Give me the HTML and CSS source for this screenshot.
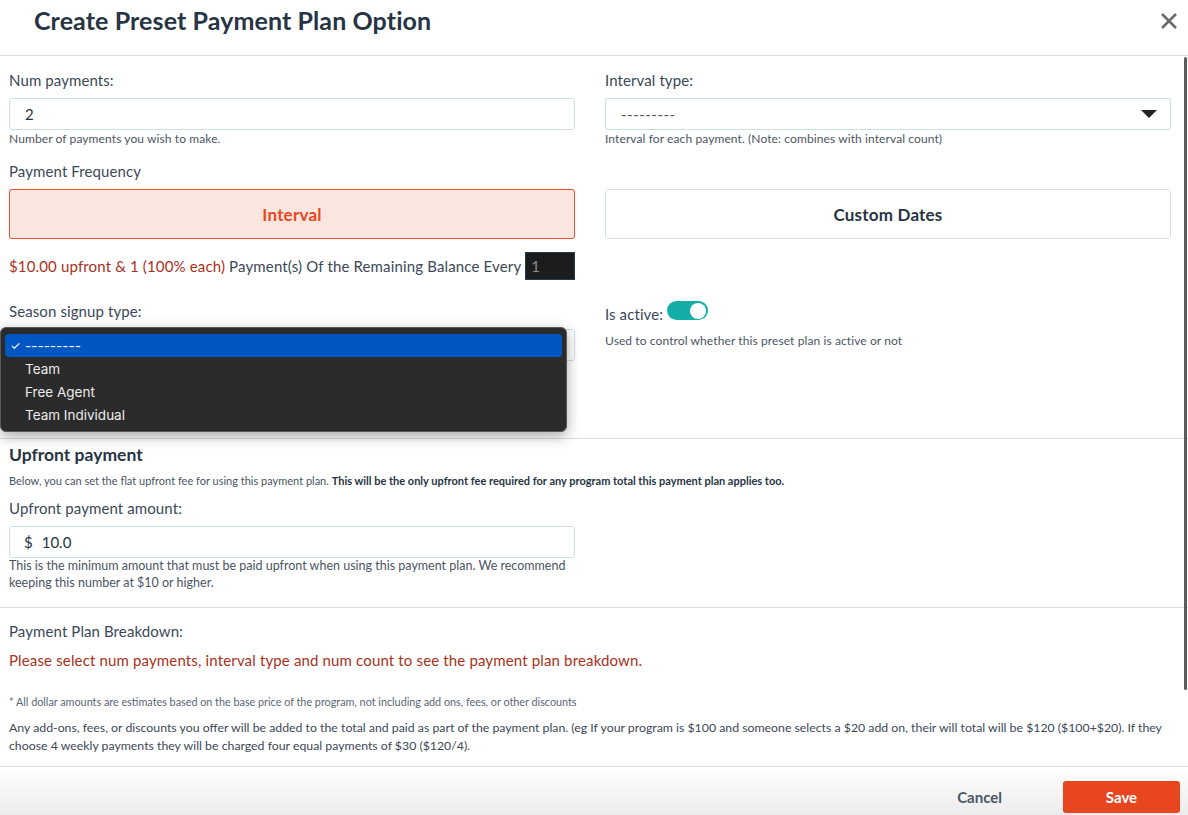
FILE: index.html
```html
<!DOCTYPE html>
<html lang="en">
<head>
<meta charset="utf-8">
<title>Create Preset Payment Plan Option</title>
<link rel="stylesheet" href="styles.css">
</head>
<body>
<div class="modal">
  <header class="modal-header">
    <h1 class="modal-title">Create Preset Payment Plan Option</h1>
    <button class="close-btn" aria-label="Close">
      <svg width="18" height="18" viewBox="0 0 18 18"><path d="M2 2 L16 16 M16 2 L2 16" stroke="#6b6b6b" stroke-width="2.6" stroke-linecap="butt"/></svg>
    </button>
  </header>

  <div class="modal-body">
    <div class="scroll-thumb"></div>

    <section class="section section-main">
      <div class="row">
        <div class="field">
          <label class="label">Num payments:</label>
          <div class="input"><span>2</span></div>
          <div class="help">Number of payments you wish to make.</div>
        </div>
        <div class="field">
          <label class="label">Interval type:</label>
          <div class="input select"><span class="placeholder">---------</span>
            <svg class="caret" width="16" height="8" viewBox="0 0 16 8"><path d="M0 0 H16 L8 8 Z" fill="#222"/></svg>
          </div>
          <div class="help">Interval for each payment. (Note: combines with interval count)</div>
        </div>
      </div>

      <div class="label freq-label">Payment Frequency</div>
      <div class="row">
        <button class="freq-btn active">Interval</button>
        <button class="freq-btn">Custom Dates</button>
      </div>
      <div class="row">
        <div class="summary">
          <span class="red">$10.00 upfront &amp; 1 (100% each)</span>&nbsp;Payment(s) Of the Remaining Balance Every
          <span class="dark-input">1</span>
        </div>
      </div>

      <div class="row season-row">
        <div class="field season-field">
          <label class="label">Season signup type:</label>
          <div class="input select season-select"></div>
          <div class="dropdown">
            <div class="opt selected"><span class="check">✓</span>---------</div>
            <div class="opt">Team</div>
            <div class="opt">Free Agent</div>
            <div class="opt">Team Individual</div>
          </div>
        </div>
        <div class="field active-field">
          <div class="active-line">
            <span class="label">Is active:</span>
            <span class="toggle"><span class="knob"></span></span>
          </div>
          <div class="help active-help">Used to control whether this preset plan is active or not</div>
        </div>
      </div>
    </section>

    <section class="section section-upfront">
      <h2 class="section-title">Upfront payment</h2>
      <p class="desc">Below, you can set the flat upfront fee for using this payment plan. <strong>This will be the only upfront fee required for any program total this payment plan applies too.</strong></p>
      <div class="half">
        <label class="label">Upfront payment amount:</label>
        <div class="input"><span class="dollar">$</span><span>10.0</span></div>
        <div class="help help-lg">This is the minimum amount that must be paid upfront when using this payment plan. We recommend keeping this number at $10 or higher.</div>
      </div>
    </section>

    <section class="section section-breakdown">
      <div class="label">Payment Plan Breakdown:</div>
      <p class="warn">Please select num payments, interval type and num count to see the payment plan breakdown.</p>
      <p class="note">* All dollar amounts are estimates based on the base price of the program, not including add ons, fees, or other discounts</p>
      <p class="para">Any add-ons, fees, or discounts you offer will be added to the total and paid as part of the payment plan. (eg If your program is $100 and someone selects a $20 add on, their will total will be $120 ($100+$20). If they choose 4 weekly payments they will be charged four equal payments of $30 ($120/4).</p>
    </section>
  </div>

  <footer class="modal-footer">
    <button class="cancel-btn">Cancel</button>
    <button class="save-btn">Save</button>
  </footer>
</div>
</body>
</html>
```

FILE: styles.css
```css
* { box-sizing: border-box; }
html, body { margin: 0; padding: 0; background: #fff; }
body {
  font-family: Lato, "Noto Sans", sans-serif;
  color: #3c4858;
  width: 1188px;
  height: 815px;
  overflow: hidden;
}
.modal { width: 1188px; height: 815px; display: flex; flex-direction: column; }

.modal-header {
  height: 56px;
  border-bottom: 1px solid #d9e0e7;
  display: flex;
  align-items: center;
  justify-content: space-between;
  padding: 0 10px 0 34px;
  flex: none;
}
.modal-title {
  margin: 0 0 16px 0;
  font-size: 25px;
  font-weight: 700;
  color: #273444;
  letter-spacing: 0.1px;
}
.close-btn {
  background: none; border: 0; padding: 0; margin: 0 0 14px 0;
  width: 18px; height: 18px; display: flex;
}

.modal-body { position: relative; flex: none; }
.scroll-thumb {
  position: absolute; right: 1px; top: 1px;
  width: 3px; height: 633px; background: #5c5c5c; border-radius: 2px;
}

.section { border-bottom: 1px solid #d9dde2; padding: 0 17px 0 9px; }
.row { display: grid; grid-template-columns: 1fr 1fr; column-gap: 30px; }
.field { display: flex; flex-direction: column; position: relative; }
.label { font-size: 15px; line-height: 20px; color: #3c4858; display: block; letter-spacing: 0.1px; }
.input {
  height: 32px;
  border: 1px solid #cfdde9;
  border-radius: 3px;
  margin-top: 8px;
  display: flex; align-items: center;
  padding: 0 15px;
  font-size: 15px; color: #273444;
  background: #fff;
}
.select { justify-content: space-between; }
.placeholder { color: #555; letter-spacing: 0.5px; }
.caret { margin-right: -2px; }
.help { font-size: 12px; line-height: 15px; color: #4b5563; margin-top: 1px; letter-spacing: 0.1px; }

.section-main { padding-top: 14px; padding-bottom: 77px; }
.freq-label { margin-top: 15px; }
.freq-btn {
  margin-top: 8px;
  height: 50px;
  border: 1px solid #d6dee6;
  border-radius: 3px;
  background: #fff;
  font-family: inherit;
  font-size: 17px; font-weight: 700; letter-spacing: 0.2px;
  color: #273444;
}
.freq-btn.active { background: #fae6df; border-color: #e8522c; color: #e8461f; }

.summary {
  margin-top: 13px;
  height: 28px;
  display: flex; align-items: center;
  font-size: 15px; color: #3c4858; letter-spacing: 0.15px;
  white-space: nowrap;
}
.red { color: #a8321b; }
.dark-input {
  margin-left: 4px;
  width: 50px; height: 28px;
  background: #1a1c1d;
  border: 1px solid #2b3a48;
  color: #8a8a8a;
  padding-left: 5px;
  display: flex; align-items: center;
  font-size: 15px;
}

.season-row { margin-top: 21px; }
.season-select { width: 100%; }
.dropdown {
  position: absolute;
  left: -9px; top: 26px;
  width: 567px; height: 105px;
  background: #2b2b2b;
  border: 1px solid #5a5a5a;
  border-radius: 6px;
  box-shadow: 0 4px 14px rgba(0,0,0,0.35);
  padding: 6px 4px;
  font-family: Inter, "Liberation Sans", sans-serif;
}
.opt {
  height: 23px; line-height: 24px;
  font-size: 13.5px; color: #ececec;
  padding-left: 20px;
  position: relative;
}
.opt.selected { background: #0057c3; border-radius: 4px; color: #fff; }
.check { position: absolute; left: 5px; top: 0; font-size: 12px; }

.active-field { padding-top: 0; }
.active-line { display: flex; align-items: center; gap: 4px; margin-top: 0; }
.toggle {
  width: 41px; height: 19px; border-radius: 10px;
  background: #14aea8;
  position: relative;
  margin-bottom: 6px;
}
.knob {
  position: absolute; right: 2px; top: 1.5px;
  width: 16px; height: 16px; border-radius: 50%;
  background: #fff;
}
.active-help { margin-top: 7px; }

.section-upfront { padding-top: 5px; padding-bottom: 16px; }
.section-title { margin: 0; font-size: 17.5px; line-height: 22px; font-weight: 700; color: #273444; }
.desc { margin: 7px 0 0; font-size: 11px; line-height: 15px; color: #4b5563; }
.desc strong { color: #273444; }
.half { width: 566px; margin-top: 10px; }
.dollar { margin-right: 9px; }
.half .input { padding-left: 14px; }
.help-lg { font-size: 12.5px; line-height: 17px; margin-top: -1px; letter-spacing: 0; }

.section-breakdown { padding-top: 13px; padding-bottom: 11px; }
.warn { margin: 9px 0 0; font-size: 15px; line-height: 20px; color: #a8321b; letter-spacing: 0.15px; }
.note { margin: 24px 0 0; font-size: 10.8px; line-height: 15px; color: #5a6675; }
.para { margin: 10px 0 0; font-size: 12.3px; line-height: 18px; color: #3c4858; }

.modal-footer {
  flex: 1;
  background: linear-gradient(#ffffff, #ececec);
  display: flex; align-items: flex-start; justify-content: flex-end;
  padding: 14px 8px 0 0;
}
.cancel-btn {
  background: none; border: 0;
  font-family: inherit; font-size: 15px; font-weight: 700;
  color: #4a5868;
  height: 32px;
  margin-right: 55px;
}
.save-btn {
  width: 117px; height: 32px;
  background: #e8461f; color: #fff;
  border: 0; border-radius: 3px;
  font-family: inherit; font-size: 15px; font-weight: 700;
}
```
